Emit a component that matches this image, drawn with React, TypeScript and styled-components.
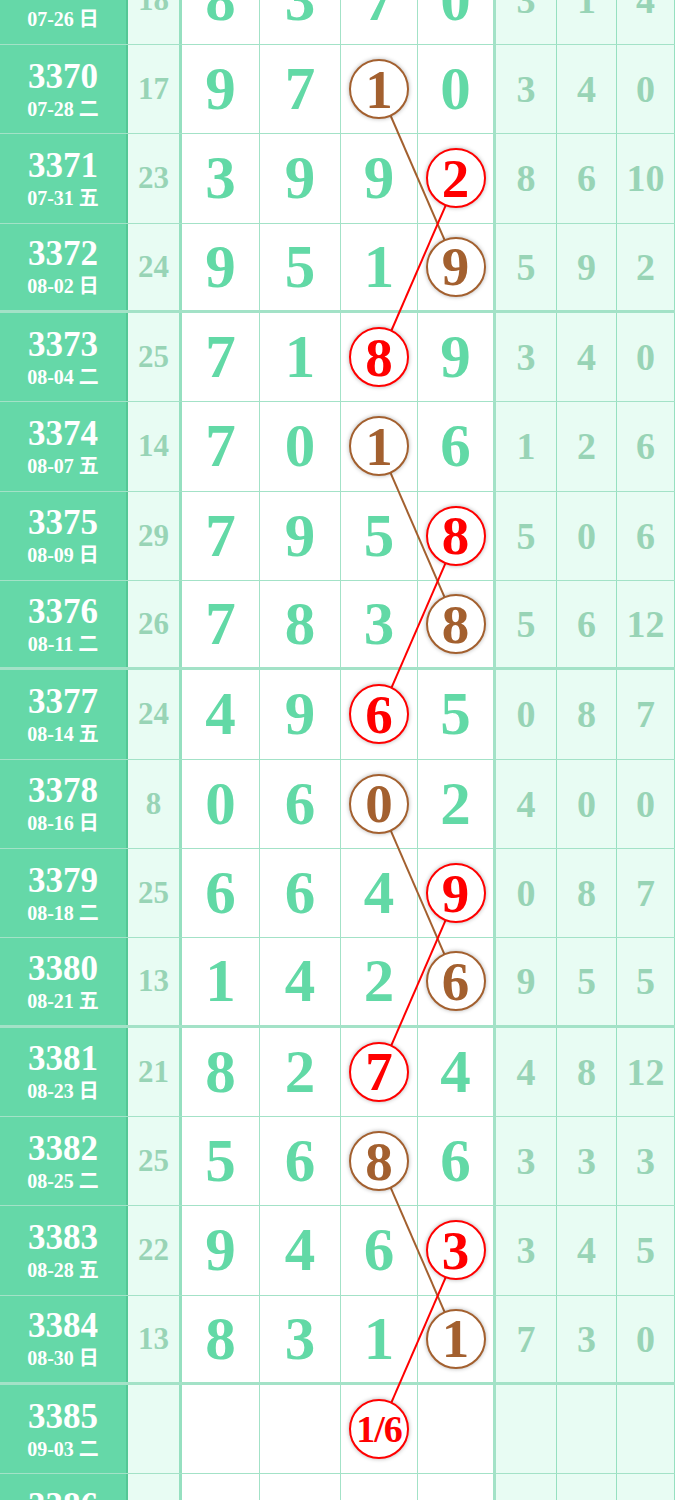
import React from "react";
import styled, { createGlobalStyle } from "styled-components";

const ROW_H = 89.33;
const COLS = [128, 54, 78, 81, 77, 78, 61, 60, 58];
const FONT = `"Liberation Serif", "Noto Sans CJK SC", serif`;
const LINE = "rgba(50, 190, 130, 0.45)";

type Mark = { col: number; tone: "brown" | "red"; text: string };
type Row = {
  no: string;
  date: string;
  sum?: string;
  digits?: string[];
  right?: string[];
  mark?: Mark;
};

const rows: Row[] = [
  { no: "3369", date: "07-26 日", sum: "18", digits: ["8", "3", "7", "0"], right: ["3", "1", "4"] },
  { no: "3370", date: "07-28 二", sum: "17", digits: ["9", "7", "", "0"], right: ["3", "4", "0"], mark: { col: 2, tone: "brown", text: "1" } },
  { no: "3371", date: "07-31 五", sum: "23", digits: ["3", "9", "9", ""], right: ["8", "6", "10"], mark: { col: 3, tone: "red", text: "2" } },
  { no: "3372", date: "08-02 日", sum: "24", digits: ["9", "5", "1", ""], right: ["5", "9", "2"], mark: { col: 3, tone: "brown", text: "9" } },
  { no: "3373", date: "08-04 二", sum: "25", digits: ["7", "1", "", "9"], right: ["3", "4", "0"], mark: { col: 2, tone: "red", text: "8" } },
  { no: "3374", date: "08-07 五", sum: "14", digits: ["7", "0", "", "6"], right: ["1", "2", "6"], mark: { col: 2, tone: "brown", text: "1" } },
  { no: "3375", date: "08-09 日", sum: "29", digits: ["7", "9", "5", ""], right: ["5", "0", "6"], mark: { col: 3, tone: "red", text: "8" } },
  { no: "3376", date: "08-11 二", sum: "26", digits: ["7", "8", "3", ""], right: ["5", "6", "12"], mark: { col: 3, tone: "brown", text: "8" } },
  { no: "3377", date: "08-14 五", sum: "24", digits: ["4", "9", "", "5"], right: ["0", "8", "7"], mark: { col: 2, tone: "red", text: "6" } },
  { no: "3378", date: "08-16 日", sum: "8", digits: ["0", "6", "", "2"], right: ["4", "0", "0"], mark: { col: 2, tone: "brown", text: "0" } },
  { no: "3379", date: "08-18 二", sum: "25", digits: ["6", "6", "4", ""], right: ["0", "8", "7"], mark: { col: 3, tone: "red", text: "9" } },
  { no: "3380", date: "08-21 五", sum: "13", digits: ["1", "4", "2", ""], right: ["9", "5", "5"], mark: { col: 3, tone: "brown", text: "6" } },
  { no: "3381", date: "08-23 日", sum: "21", digits: ["8", "2", "", "4"], right: ["4", "8", "12"], mark: { col: 2, tone: "red", text: "7" } },
  { no: "3382", date: "08-25 二", sum: "25", digits: ["5", "6", "", "6"], right: ["3", "3", "3"], mark: { col: 2, tone: "brown", text: "8" } },
  { no: "3383", date: "08-28 五", sum: "22", digits: ["9", "4", "6", ""], right: ["3", "4", "5"], mark: { col: 3, tone: "red", text: "3" } },
  { no: "3384", date: "08-30 日", sum: "13", digits: ["8", "3", "1", ""], right: ["7", "3", "0"], mark: { col: 3, tone: "brown", text: "1" } },
  { no: "3385", date: "09-03 二", mark: { col: 2, tone: "red", text: "1/6" } },
  { no: "3386", date: "09-06 五" },
];

// which marked rows are joined by a trend line
const links: [number, number][] = [];
for (let g = 1; g < 17; g += 4) {
  links.push([g, g + 2], [g + 1, g + 3]);
}

const toneColor = { brown: "#a3602f", red: "#ff0000" };

const GlobalStyle = createGlobalStyle`
  html, body {
    margin: 0;
    padding: 0;
    background: #fff;
    overflow: hidden;
  }
  body {
    font-family: ${FONT};
  }
`;

const Chart = styled.div`
  position: relative;
  width: 675px;
  margin-top: -44.33px;
`;

const TableRow = styled.div<{ $groupEnd: boolean }>`
  display: grid;
  grid-template-columns: ${COLS.map((c) => c + "px").join(" ")};
  height: ${ROW_H}px;
  box-sizing: border-box;
  border-bottom: ${(p) => (p.$groupEnd ? 3 : 1)}px solid ${LINE};
`;

const IssueCell = styled.div`
  display: flex;
  flex-direction: column;
  align-items: center;
  justify-content: center;
  background: #65d8a8;
  border-right: 2px solid #55c796;
  color: #fff;
  font-weight: 700;
`;

const IssueNo = styled.div`
  font-size: 35px;
  line-height: 35px;
`;

const IssueDate = styled.div`
  font-size: 20px;
  line-height: 22px;
  margin-top: 4px;
`;

const Cell = styled.div<{ $tint?: boolean; $thick?: boolean }>`
  display: flex;
  align-items: center;
  justify-content: center;
  box-sizing: border-box;
  background: ${(p) => (p.$tint ? "#e8fcf3" : "#fff")};
  border-right: ${(p) => (p.$thick ? 3 : 1)}px solid ${LINE};
  font-weight: 700;
`;

const SumText = styled.span`
  font-size: 31px;
  color: #98d4b6;
`;

const Digit = styled.span`
  font-size: 61px;
  color: #62d9a6;
`;

const SideText = styled.span`
  font-size: 38px;
  color: #98d4b6;
`;

const Ball = styled.span<{ $tone: "brown" | "red"; $small?: boolean }>`
  position: relative;
  z-index: 2;
  width: 60px;
  height: 60px;
  box-sizing: border-box;
  border-radius: 50%;
  border: 2px solid ${(p) => toneColor[p.$tone]};
  background: #fff;
  color: ${(p) => toneColor[p.$tone]};
  box-shadow: 0 0 4px rgba(0, 0, 0, 0.3);
  display: flex;
  align-items: center;
  justify-content: center;
  font-size: ${(p) => (p.$small ? 38 : 55)}px;
  line-height: 1;
  letter-spacing: ${(p) => (p.$small ? "-1px" : "0")};
`;

const Overlay = styled.svg`
  position: absolute;
  top: 0;
  left: 0;
  z-index: 1;
  pointer-events: none;
`;

function colCenter(i: number) {
  let x = 0;
  for (let k = 0; k < i; k++) x += COLS[k];
  return x + COLS[i] / 2;
}

export default function App() {
  const height = rows.length * ROW_H;
  return (
    <>
      <GlobalStyle />
      <Chart>
        {rows.map((r, i) => (
          <TableRow key={r.no} $groupEnd={i % 4 === 3}>
            <IssueCell>
              <IssueNo>{r.no}</IssueNo>
              <IssueDate>{r.date}</IssueDate>
            </IssueCell>
            <Cell $tint $thick>
              <SumText>{r.sum}</SumText>
            </Cell>
            {[0, 1, 2, 3].map((c) => (
              <Cell key={c} $thick={c === 3}>
                {r.mark && r.mark.col === c ? (
                  <Ball $tone={r.mark.tone} $small={r.mark.text.length > 1}>
                    {r.mark.text}
                  </Ball>
                ) : (
                  <Digit>{r.digits ? r.digits[c] : ""}</Digit>
                )}
              </Cell>
            ))}
            {[0, 1, 2].map((c) => (
              <Cell key={"r" + c} $tint>
                <SideText>{r.right ? r.right[c] : ""}</SideText>
              </Cell>
            ))}
          </TableRow>
        ))}
        <Overlay width={675} height={height}>
          {links.map(([a, b]) => {
            const ma = rows[a].mark!;
            const mb = rows[b].mark!;
            return (
              <line
                key={a}
                x1={colCenter(ma.col + 2)}
                y1={a * ROW_H + ROW_H / 2}
                x2={colCenter(mb.col + 2)}
                y2={b * ROW_H + ROW_H / 2}
                stroke={toneColor[ma.tone]}
                strokeWidth={2}
              />
            );
          })}
        </Overlay>
      </Chart>
    </>
  );
}
